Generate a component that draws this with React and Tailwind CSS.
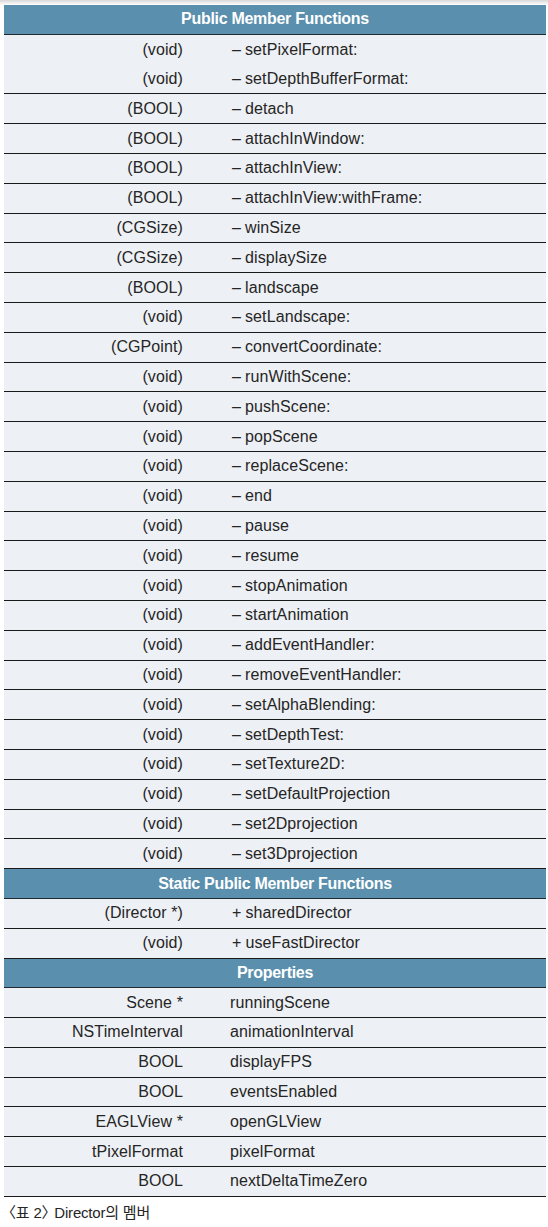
import React from 'react';

const publicFns = [
  ['(void)', 'setPixelFormat:'],
  ['(void)', 'setDepthBufferFormat:'],
  ['(BOOL)', 'detach'],
  ['(BOOL)', 'attachInWindow:'],
  ['(BOOL)', 'attachInView:'],
  ['(BOOL)', 'attachInView:withFrame:'],
  ['(CGSize)', 'winSize'],
  ['(CGSize)', 'displaySize'],
  ['(BOOL)', 'landscape'],
  ['(void)', 'setLandscape:'],
  ['(CGPoint)', 'convertCoordinate:'],
  ['(void)', 'runWithScene:'],
  ['(void)', 'pushScene:'],
  ['(void)', 'popScene'],
  ['(void)', 'replaceScene:'],
  ['(void)', 'end'],
  ['(void)', 'pause'],
  ['(void)', 'resume'],
  ['(void)', 'stopAnimation'],
  ['(void)', 'startAnimation'],
  ['(void)', 'addEventHandler:'],
  ['(void)', 'removeEventHandler:'],
  ['(void)', 'setAlphaBlending:'],
  ['(void)', 'setDepthTest:'],
  ['(void)', 'setTexture2D:'],
  ['(void)', 'setDefaultProjection'],
  ['(void)', 'set2Dprojection'],
  ['(void)', 'set3Dprojection'],
];

const staticFns = [
  ['(Director *)', 'sharedDirector'],
  ['(void)', 'useFastDirector'],
];

const properties = [
  ['Scene *', 'runningScene'],
  ['NSTimeInterval', 'animationInterval'],
  ['BOOL', 'displayFPS'],
  ['BOOL', 'eventsEnabled'],
  ['EAGLView *', 'openGLView'],
  ['tPixelFormat', 'pixelFormat'],
  ['BOOL', 'nextDeltaTimeZero'],
];

const Header = ({ title }) => (
  <div className="h-[29.8px] flex items-center justify-center bg-[#5a8fad] border-b border-[#1e2a30] text-white font-bold text-[16px] tracking-[-0.3px]">
    {title}
  </div>
);

const Row = ({ type, name, prefix, noLine }) => (
  <div className={`h-[29.8px] flex items-center bg-[#edf0f4] ${noLine ? '' : 'border-b border-[#1a1a1a]'}`}>
    <div className="w-[220px] pr-[41px] text-right">{type}</div>
    <div className={prefix ? 'pl-[8px]' : 'pl-[6px]'}>
      {prefix && <span className="mr-[4px]">{prefix}</span>}
      {name}
    </div>
  </div>
);

export default function App() {
  return (
    <div className="w-[548px] h-[1227px] bg-white font-['Liberation_Sans',sans-serif] text-[16px] text-[#252525] tracking-[0.1px]">
      <div className="h-[5px] bg-gradient-to-b from-[#d8d8d8] to-white"></div>
      <div className="ml-[4px] w-[542px]">
        <Header title="Public Member Functions" />
        {publicFns.map(([t, n], i) => (
          <Row key={n} type={t} name={n} prefix="–" noLine={i === 0} />
        ))}
        <Header title="Static Public Member Functions" />
        {staticFns.map(([t, n]) => (
          <Row key={n} type={t} name={n} prefix="+" />
        ))}
        <Header title="Properties" />
        {properties.map(([t, n]) => (
          <Row key={n} type={t} name={n} />
        ))}
        <div className="pt-[5px] text-[15px] tracking-[-0.2px] font-['Liberation_Sans','Noto_Sans_CJK_KR',sans-serif]">
          <span className="-ml-[3px]">〈</span>표 2<span className="-mr-[2px]">〉</span>Director의 멤버
        </div>
      </div>
    </div>
  );
}
